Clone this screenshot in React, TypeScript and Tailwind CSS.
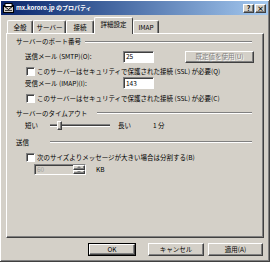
import React from "react";

const raised =
  "border border-t-white border-l-white border-r-[#404040] border-b-[#404040] shadow-[inset_-1px_-1px_0_#808080]";
const sunken =
  "border border-t-[#808080] border-l-[#808080] border-r-white border-b-white shadow-[inset_1px_1px_0_#404040]";

function Etched({ className }: { className: string }) {
  return <div className={"h-[2px] border-t border-t-[#808080] border-b border-b-white " + className} />;
}

function Check() {
  return <div className={"w-[9px] h-[9px] bg-white shrink-0 " + sunken} />;
}

function Tab({ children, className, selected }: { children: React.ReactNode; className: string; selected?: boolean }) {
  if (selected) {
    return (
      <div
        className={
          "relative z-10 h-[17px] -mb-[1px] bg-[#d4d0c8] border-t border-l border-r border-t-white border-l-white border-r-[#404040] rounded-t-[2px] flex items-start pt-[3px] justify-center " +
          className
        }
      >
        {children}
      </div>
    );
  }
  return (
    <div
      className={
        "h-[13px] border-t border-l border-r border-t-white border-l-white border-r-[#404040] shadow-[inset_-1px_0_0_#808080] rounded-t-[2px] flex items-center justify-center " +
        className
      }
    >
      {children}
    </div>
  );
}

export default function App() {
  return (
    <div className="w-[270px] h-[262px] bg-[#d4d0c8] border-r border-b border-r-[#404040] border-b-[#404040] shadow-[inset_1px_1px_0_#ffffff,inset_-1px_-1px_0_#808080] flex flex-col font-['Noto_Sans_CJK_JP','Noto_Sans',sans-serif] text-[6.5px] leading-none text-black overflow-hidden">
      {/* title bar */}
      <div className="mt-[1px] mx-[1px] h-[14px] bg-gradient-to-r from-[#0a246a] to-[#a6caf0] flex items-center pl-[2px] pr-[2px]">
        <svg width="11" height="10" viewBox="0 0 11 10" className="shrink-0">
          <rect x="0.5" y="2.5" width="10" height="7" fill="#d4d0c8" stroke="#000" />
          <rect x="2" y="0.5" width="7" height="3" fill="#ffffff" stroke="#000" />
          <path d="M1 3 L5.5 6.5 L10 3" fill="none" stroke="#000" />
          <rect x="2" y="7" width="7" height="1" fill="#404040" />
        </svg>
        <span className="ml-[2px] text-white font-bold text-[6px] whitespace-nowrap">mx.kororo.jp のプロパティ</span>
        <div className="flex-1" />
        <div className={"w-[11px] h-[9px] bg-[#d4d0c8] flex items-center justify-center text-[7px] font-bold " + raised}>?</div>
        <div className={"ml-[1px] w-[11px] h-[9px] bg-[#d4d0c8] flex items-center justify-center text-[7px] font-bold " + raised}>×</div>
      </div>

      {/* tabs */}
      <div className="h-[18px] pl-[7px] flex items-end">
        <Tab className="w-[26px]">全般</Tab>
        <Tab className="w-[33px]">サーバー</Tab>
        <Tab className="w-[28px]">接続</Tab>
        <Tab className="w-[39px]" selected>
          詳細設定
        </Tab>
        <Tab className="w-[26px]">IMAP</Tab>
      </div>

      {/* panel */}
      <div className={"ml-[6px] w-[258px] h-[205px] flex flex-col " + raised}>
        {/* header 1 */}
        <div className="h-[15px] pl-[9px] pr-[11px] flex items-center">
          <span className="w-[69px] whitespace-nowrap">サーバーのポート番号</span>
          <Etched className="flex-1" />
        </div>
        {/* SMTP */}
        <div className="h-[15px] pl-[18px] flex items-center">
          <span className="w-[98px] whitespace-nowrap">送信メール (SMTP)(O):</span>
          <div className={"w-[31px] h-[12px] bg-white flex items-center pl-[2px] " + sunken}>25</div>
          <div
            className={
              "ml-[31px] w-[69px] h-[12px] flex items-center justify-center text-[#808080] [text-shadow:1px_1px_0_#fff] whitespace-nowrap " +
              raised
            }
          >
            既定値を使用(U)
          </div>
        </div>
        {/* check 1 */}
        <div className="h-[14px] pl-[19px] flex items-center">
          <Check />
          <span className="ml-[2px] whitespace-nowrap">このサーバーはセキュリティで保護された接続 (SSL) が必要(Q)</span>
        </div>
        {/* IMAP */}
        <div className="h-[10px] pl-[18px] flex items-center">
          <span className="w-[98px] whitespace-nowrap">受信メール (IMAP)(I):</span>
          <div className={"w-[31px] h-[12px] shrink-0 bg-white flex items-center pl-[2px] " + sunken}>143</div>
        </div>
        {/* check 2 */}
        <div className="h-[20px] pl-[19px] flex items-center">
          <Check />
          <span className="ml-[2px] whitespace-nowrap">このサーバーはセキュリティで保護された接続 (SSL) が必要(C)</span>
        </div>
        {/* header 2 */}
        <div className="h-[10px] pl-[9px] pr-[11px] flex items-center">
          <span className="w-[81px] whitespace-nowrap">サーバーのタイムアウト</span>
          <Etched className="flex-1" />
        </div>
        {/* slider */}
        <div className="h-[14px] pl-[18px] flex items-center">
          <span className="w-[25px]">短い</span>
          <div className="relative w-[60px] h-[10px] flex items-center">
            <div className="w-full h-[3px] border-t border-t-[#808080] border-b border-b-white bg-[#404040]" />
            <div className={"absolute left-[7px] top-[1px] w-[5px] h-[9px] bg-[#d4d0c8] " + raised} />
          </div>
          <span className="ml-[8px] w-[35px]">長い</span>
          <span>1 分</span>
        </div>
        {/* header 3 */}
        <div className="h-[20px] pl-[9px] pr-[11px] flex items-center">
          <span className="w-[34px] whitespace-nowrap">送信</span>
          <Etched className="flex-1" />
        </div>
        {/* check 3 */}
        <div className="h-[10px] pl-[19px] flex items-center">
          <Check />
          <span className="ml-[2px] whitespace-nowrap">次のサイズよりメッセージが大きい場合は分割する(B)</span>
        </div>
        {/* spin */}
        <div className="mt-[1px] h-[13px] pl-[27px] flex items-center">
          <div className={"w-[52px] h-[11px] bg-[#d4d0c8] flex items-stretch " + sunken}>
            <span className="flex-1 flex items-center pl-[2px] text-[#a0a0a0]">60</span>
            <div className="w-[12px] flex flex-col">
              <div className={"flex-1 flex items-center justify-center " + raised}>
                <div className="w-0 h-0 border-l-[2px] border-r-[2px] border-b-[2px] border-l-transparent border-r-transparent border-b-[#808080]" />
              </div>
              <div className={"flex-1 flex items-center justify-center " + raised}>
                <div className="w-0 h-0 border-l-[2px] border-r-[2px] border-t-[2px] border-l-transparent border-r-transparent border-t-[#808080]" />
              </div>
            </div>
          </div>
          <span className="ml-[10px]">KB</span>
        </div>
      </div>

      {/* buttons */}
      <div className="mt-[5px] h-[13px] pl-[88px] flex">
        <div className="w-[48px] h-[13px] border border-black">
          <div className={"w-full h-full flex items-center justify-center " + raised}>OK</div>
        </div>
        <div className={"ml-[12px] w-[56px] h-[13px] flex items-center justify-center " + raised}>キャンセル</div>
        <div className={"ml-[4px] w-[55px] h-[13px] flex items-center justify-center " + raised}>適用(A)</div>
      </div>
    </div>
  );
}
